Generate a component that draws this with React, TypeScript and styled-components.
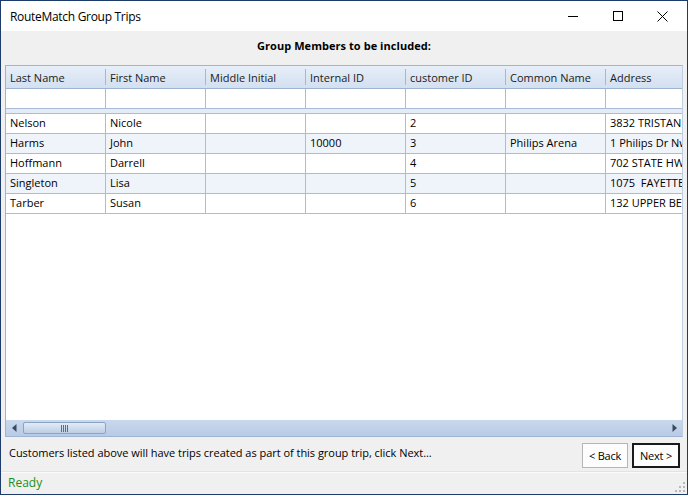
import React from "react";
import styled, { createGlobalStyle } from "styled-components";

const Global = createGlobalStyle`
  html, body { margin: 0; padding: 0; background: #ffffff; }
  * { box-sizing: border-box; }
`;

const FONT = `"Open Sans", "Noto Sans", "Liberation Sans", sans-serif`;

const Window = styled.div`
  width: 688px;
  height: 495px;
  border: 1px solid #1d3c6a;
  display: flex;
  flex-direction: column;
  font-family: ${FONT};
  font-size: 11px;
  color: #000;
  background: #f0f0f0;
  overflow: hidden;
`;

const TitleBar = styled.div`
  height: 30px;
  flex: 0 0 30px;
  background: #ffffff;
  display: flex;
  align-items: center;
  padding-left: 9px;
`;

const Title = styled.div`
  flex: 1;
  font-size: 12px;
  letter-spacing: -0.3px;
  padding-top: 1px;
`;

const Controls = styled.div`
  display: flex;
  height: 100%;
  padding-right: 2px;
`;

const ControlBtn = styled.div`
  width: 45px;
  height: 100%;
  display: flex;
  align-items: center;
  justify-content: center;
`;

const Heading = styled.div`
  height: 34px;
  flex: 0 0 34px;
  display: flex;
  align-items: center;
  justify-content: center;
  font-weight: 700;
  font-size: 11px;
  letter-spacing: 0.05px;
  padding-bottom: 5px;
`;

const Grid = styled.div`
  margin: 0 4px 0 4px;
  height: 372px;
  flex: 0 0 372px;
  border: 1px solid #9eb4d2;
  border-right-color: #c2cfe0;
  background: #ffffff;
  display: flex;
  flex-direction: column;
  overflow: hidden;
`;

const Row = styled.div<{ $alt?: boolean }>`
  display: flex;
  height: 20px;
  flex: 0 0 20px;
  border-bottom: 1px solid #a9bcd8;
  background: ${(p) => (p.$alt ? "#eff3fa" : "#ffffff")};
`;

const HeaderRow = styled.div`
  display: flex;
  height: 23px;
  flex: 0 0 23px;
  border-bottom: 1px solid #9eb4d2;
  background: linear-gradient(#e6eef8, #d3e0f1);
`;

const HeaderCell = styled.div`
  width: 100px;
  flex: 0 0 100px;
  padding-left: 4px;
  display: flex;
  align-items: center;
  white-space: nowrap;
  overflow: hidden;
  position: relative;
  color: #1a1a1a;
  &::after {
    content: "";
    position: absolute;
    right: 0;
    top: 3px;
    bottom: 3px;
    border-right: 1px solid #a3b8d6;
  }
`;

const FilterRow = styled(Row)`
  height: 20px;
  flex: 0 0 20px;
`;

const Band = styled.div`
  height: 5px;
  flex: 0 0 5px;
  background: #e4ebf5;
  border-bottom: 1px solid #a9bcd8;
`;

const Cell = styled.div`
  width: 100px;
  flex: 0 0 100px;
  padding-left: 4px;
  padding-bottom: 2px;
  display: flex;
  align-items: center;
  white-space: pre;
  overflow: hidden;
  border-right: 1px solid #a9bcd8;
`;

const Spacer = styled.div`
  flex: 1;
`;

const HScroll = styled.div`
  height: 16px;
  flex: 0 0 16px;
  background: linear-gradient(#c9d8ec, #b8cbe5);
  display: flex;
  align-items: center;
  padding: 0 2px;
`;

const Arrow = styled.div`
  width: 12px;
  display: flex;
  align-items: center;
  justify-content: center;
`;

const Thumb = styled.div`
  margin-left: 3px;
  width: 83px;
  height: 12px;
  border: 1px solid #8aa4c6;
  border-radius: 2px;
  background: linear-gradient(#e3ebf6, #bccee6);
  display: flex;
  align-items: center;
  justify-content: center;
`;

const Footer = styled.div`
  height: 34px;
  flex: 0 0 34px;
  display: flex;
  align-items: center;
  padding: 2px 7px 0 8px;
`;

const FooterText = styled.div`
  flex: 1;
  letter-spacing: -0.03px;
  padding-bottom: 5px;
`;

const Button = styled.button<{ $default?: boolean; $w: number }>`
  font-family: ${FONT};
  font-size: 11px;
  width: ${(p) => p.$w}px;
  height: 25px;
  margin-left: 4px;
  padding: 0;
  color: #000;
  background: #fdfdfd;
  border: ${(p) => (p.$default ? "2px solid #1a1a1a" : "1px solid #b5b5b5")};
  letter-spacing: -0.2px;
`;

const StatusBar = styled.div`
  flex: 1;
  border-top: 1px solid #e3e3e3;
  box-shadow: inset 0 1px 0 #fafafa;
  display: flex;
  align-items: center;
  padding-left: 7px;
  padding-bottom: 1px;
  color: #1b8f1b;
  font-size: 12px;
  position: relative;
`;

const Grip = styled.svg`
  position: absolute;
  right: 2px;
  bottom: 2px;
`;

const columns = [
  "Last Name",
  "First Name",
  "Middle Initial",
  "Internal ID",
  "customer ID",
  "Common Name",
  "Address",
];

const rows = [
  ["Nelson", "Nicole", "", "", "2", "", "3832 TRISTAN"],
  ["Harms", "John", "", "10000", "3", "Philips Arena", "1 Philips Dr Nw"],
  ["Hoffmann", "Darrell", "", "", "4", "", "702 STATE HWY"],
  ["Singleton", "Lisa", "", "", "5", "", "1075  FAYETTEVILLE"],
  ["Tarber", "Susan", "", "", "6", "", "132 UPPER BETHANY"],
];

export default function App() {
  return (
    <>
      <Global />
      <Window>
        <TitleBar>
          <Title>RouteMatch Group Trips</Title>
          <Controls>
            <ControlBtn>
              <svg width="10" height="10" viewBox="0 0 10 10">
                <line x1="0" y1="5.5" x2="10" y2="5.5" stroke="#000" strokeWidth="1" />
              </svg>
            </ControlBtn>
            <ControlBtn>
              <svg width="10" height="10" viewBox="0 0 10 10">
                <rect x="0.5" y="0.5" width="9" height="9" fill="none" stroke="#000" strokeWidth="1" />
              </svg>
            </ControlBtn>
            <ControlBtn>
              <svg width="11" height="11" viewBox="0 0 11 11">
                <path d="M0.5 0.5 L10.5 10.5 M10.5 0.5 L0.5 10.5" stroke="#000" strokeWidth="1" />
              </svg>
            </ControlBtn>
          </Controls>
        </TitleBar>
        <Heading>Group Members to be included:</Heading>
        <Grid>
          <HeaderRow>
            {columns.map((c) => (
              <HeaderCell key={c}>{c}</HeaderCell>
            ))}
          </HeaderRow>
          <FilterRow>
            {columns.map((c) => (
              <Cell key={c} />
            ))}
          </FilterRow>
          <Band />
          {rows.map((r, i) => (
            <Row key={i} $alt={i % 2 === 1}>
              {r.map((v, j) => (
                <Cell key={j}>{v}</Cell>
              ))}
            </Row>
          ))}
          <Spacer />
          <HScroll>
            <Arrow>
              <svg width="5" height="8" viewBox="0 0 5 8">
                <path d="M4.5 0 L0 4 L4.5 8 Z" fill="#3a4a5e" />
              </svg>
            </Arrow>
            <Thumb>
              <svg width="8" height="7" viewBox="0 0 8 7">
                <path d="M0.5 0 V7 M2.5 0 V7 M4.5 0 V7 M6.5 0 V7" stroke="#5a6e88" strokeWidth="1" />
              </svg>
            </Thumb>
            <Spacer />
            <Arrow>
              <svg width="5" height="8" viewBox="0 0 5 8">
                <path d="M0.5 0 L5 4 L0.5 8 Z" fill="#3a4a5e" />
              </svg>
            </Arrow>
          </HScroll>
        </Grid>
        <Footer>
          <FooterText>
            Customers listed above will have trips created as part of this group trip, click Next...
          </FooterText>
          <Button $w={46}>&lt; Back</Button>
          <Button $w={48} $default>
            Next &gt;
          </Button>
        </Footer>
        <StatusBar>
          Ready
          <Grip width="10" height="10" viewBox="0 0 10 10">
            <g fill="#b8b8b8">
              <rect x="8" y="0" width="2" height="2" />
              <rect x="4" y="4" width="2" height="2" />
              <rect x="8" y="4" width="2" height="2" />
              <rect x="0" y="8" width="2" height="2" />
              <rect x="4" y="8" width="2" height="2" />
              <rect x="8" y="8" width="2" height="2" />
            </g>
          </Grip>
        </StatusBar>
      </Window>
    </>
  );
}
